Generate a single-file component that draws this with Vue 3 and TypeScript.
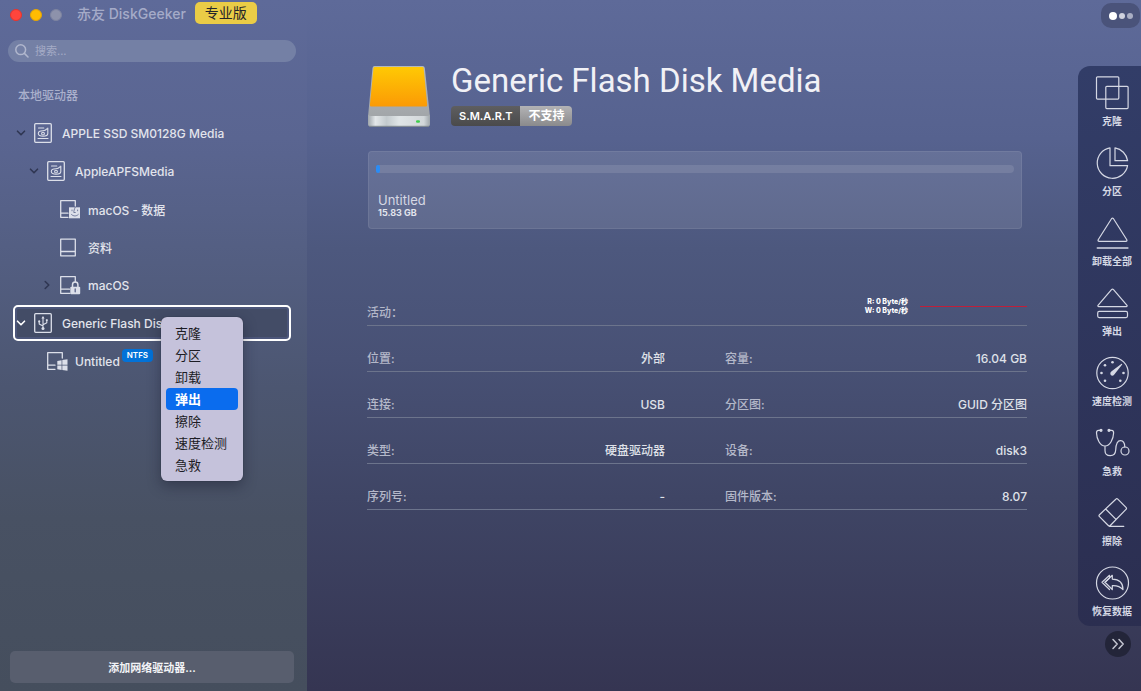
<script setup lang="ts">
import { ref } from 'vue'

type DriveIcon = 'ssd' | 'usb' | 'data' | 'volume' | 'locked' | 'windows'

interface Drive {
  id: string
  name: string
  level: number
  icon: DriveIcon
  arrow?: 'open' | 'closed'
  tag?: string
}

interface Detail {
  label: string
  value: string
}

const drives: Drive[] = [
  { id: 'ssd', name: 'APPLE SSD SM0128G Media', level: 0, icon: 'ssd', arrow: 'open' },
  { id: 'apfs', name: 'AppleAPFSMedia', level: 1, icon: 'ssd', arrow: 'open' },
  { id: 'data', name: 'macOS - 数据', level: 2, icon: 'data' },
  { id: 'docs', name: '资料', level: 2, icon: 'volume' },
  { id: 'macos', name: 'macOS', level: 2, icon: 'locked', arrow: 'closed' },
  { id: 'flash', name: 'Generic Flash Disk Media', level: 0, icon: 'usb', arrow: 'open' },
  { id: 'untitled', name: 'Untitled', level: 1, icon: 'windows', tag: 'NTFS' },
]

const menuItems = ['克隆', '分区', '卸载', '弹出', '擦除', '速度检测', '急救']
const tools = ['克隆', '分区', '卸载全部', '弹出', '速度检测', '急救', '擦除', '恢复数据']

const details: [Detail, Detail][] = [
  [{ label: '位置:', value: '外部' }, { label: '容量:', value: '16.04 GB' }],
  [{ label: '连接:', value: 'USB' }, { label: '分区图:', value: 'GUID 分区图' }],
  [{ label: '类型:', value: '硬盘驱动器' }, { label: '设备:', value: 'disk3' }],
  [{ label: '序列号:', value: '-' }, { label: '固件版本:', value: '8.07' }],
]

const selected = ref('flash')
const activeItem = ref('弹出')
const query = ref('')
</script>

<template>
  <div class="window">
    <aside class="sidebar">
      <header class="titlebar">
        <button class="light red" type="button" aria-label="关闭"></button>
        <button class="light yellow" type="button" aria-label="最小化"></button>
        <button class="light grey" type="button" aria-label="缩放"></button>
        <span class="app-name">赤友 DiskGeeker</span>
        <span class="edition">专业版</span>
      </header>

      <label class="search">
        <svg width="14" height="14" viewBox="0 0 14 14" fill="none" stroke="currentColor" stroke-width="1.5" stroke-linecap="round" aria-hidden="true">
          <circle cx="5.7" cy="5.7" r="4.9" />
          <path d="M9.4 9.4 13 13" />
        </svg>
        <input v-model="query" type="search" placeholder="搜索..." aria-label="搜索" />
      </label>

      <h2 class="group">本地驱动器</h2>

      <ul class="tree">
        <li v-for="d in drives" :key="d.id" class="node" :class="['level-' + d.level, { selected: selected === d.id }]">
          <button class="node-row" type="button" @click="selected = d.id">
            <span class="arrow">
              <svg v-if="d.arrow" width="10" height="10" viewBox="0 0 10 10" fill="none" stroke="currentColor" stroke-width="1.6" stroke-linecap="round" stroke-linejoin="round">
                <path :d="d.arrow === 'open' ? 'M1.5 3.2 5 6.8 8.5 3.2' : 'M3.2 1.5 6.8 5 3.2 8.5'" />
              </svg>
            </span>
            <svg class="drive-icon" width="21" height="20" viewBox="0 0 21 20" fill="none" stroke="currentColor" stroke-width="1.3" stroke-linejoin="round" stroke-linecap="round">
              <template v-if="d.icon === 'ssd'">
                <rect x=".7" y=".7" width="16.6" height="18.6" rx="1" />
                <path d="M4.5 5H9.800M13.800 5v5.500c0 1.700-2.200 2.700-4.800 2.700s-4.700-1-4.700-2.700S6.400 7.800 9 7.800c1.700 0 3-.8 3.900-1.900M4 15.500h10" stroke-width="1.100" />
                <circle cx="9" cy="10.600" r="1.400" stroke-width="1.100" />
              </template>
              <template v-else-if="d.icon === 'usb'">
                <rect x=".7" y=".7" width="16.6" height="18.6" rx="1" />
                <path d="M9 5v10M9 13 5.200 11V9M9 11.800 12.800 9.800V7.500" stroke-width="1.100" />
                <path d="M9 3 7.400 5.600h3.200zM11.900 6.200h1.800v1.800h-1.800z" fill="currentColor" stroke="none" />
                <circle cx="5.200" cy="8.400" r="1.100" fill="currentColor" stroke="none" />
                <circle cx="9" cy="15.400" r="1.500" fill="currentColor" stroke="none" />
              </template>
              <template v-else>
                <path v-if="d.icon === 'volume'" d="M.7 2.200h14.600v16.600H.7zM.7 14.500h14.600" />
                <path v-else-if="d.icon === 'locked'" d="M15.300 7V1.700H.7v16.600H10M.7 14.200H9.500" />
                <path v-else d="M15.300 7V1.700H.7v16.600H8M.7 14.200H8" />
                <template v-if="d.icon === 'data'">
                  <path d="M9 8.300h11v11H9z" fill="currentColor" stroke="none" />
                  <path class="cut" d="M15.200 8.300c-1 2-1.400 3.700-1.400 5.200h1.500M12 11v.8M17.600 11v.8M11.500 15.500c2 2 4.800 2 6.800 0" stroke-width=".8" />
                </template>
                <template v-else-if="d.icon === 'locked'">
                  <path d="M12.500 12V9.800a2.700 2.700 0 0 1 5.400 0V12" stroke-width="1.500" />
                  <rect x="10.300" y="11.700" width="9.900" height="7.500" rx="1" fill="currentColor" stroke="none" />
                  <path class="cut" d="M15.200 14v2.800" stroke-width="1.300" />
                </template>
                <path v-else-if="d.icon === 'windows'" d="M10.300 10l4.300-.8v4.500h-4.300zM15.300 9.100l5.200-.8v5.400h-5.200zM10.300 14.400h4.300v4.500l-4.300-.7zM15.300 14.400h5.200v5.400l-5.200-.8z" fill="currentColor" stroke="none" />
              </template>
            </svg>
            <span class="name">{{ d.name }}</span>
            <span v-if="d.tag" class="tag">{{ d.tag }}</span>
          </button>

          <div v-if="d.id === 'flash'" class="menu" role="menu">
            <button
              v-for="m in menuItems"
              :key="m"
              type="button"
              role="menuitem"
              :class="{ active: activeItem === m }"
              @mouseenter="activeItem = m"
            >{{ m }}</button>
          </div>
        </li>
      </ul>

      <button class="add" type="button">添加网络驱动器...</button>
    </aside>

    <main class="content">
      <header class="disk-header">
        <svg class="disk" width="64" height="64" viewBox="0 0 64 64" aria-hidden="true">
          <defs>
            <linearGradient id="orange" x1="0" y1="0" x2="0" y2="1">
              <stop offset="0" stop-color="#ffc904" />
              <stop offset="1" stop-color="#fb9a05" />
            </linearGradient>
            <linearGradient id="shelf" x1="0" y1="0" x2="0" y2="1">
              <stop offset="0" stop-color="#b4b8ba" />
              <stop offset="1" stop-color="#a2a6a9" />
            </linearGradient>
            <linearGradient id="front" x1="0" y1="0" x2="1" y2="0">
              <stop offset="0" stop-color="#9fa6ab" />
              <stop offset=".12" stop-color="#e3e7e9" />
              <stop offset=".3" stop-color="#c3cacd" />
              <stop offset=".5" stop-color="#e0e5e7" />
              <stop offset=".9" stop-color="#d2d7d9" />
              <stop offset="1" stop-color="#9fa6ab" />
            </linearGradient>
          </defs>
          <path d="M7.500 1h48q2 0 2.300 2l5.200 49H1L5.500 3q.3-2 2-2z" fill="url(#shelf)" />
          <path d="M7.800 2h47.400q1.200 0 1.400 1.300l3.600 36.700q.1 1.500-1.400 1.500H4.300q-1.500 0-1.400-1.500L6.500 3.300Q6.700 2 7.800 2z" fill="url(#orange)" />
          <path d="M1 49.500q1 1.500 3 1.500h56q2 0 3-1.500v10q0 2-2.500 2h-57Q1 61.500 1 59.500z" fill="url(#front)" />
          <path d="M2 61.300h60" stroke="#7e868c" stroke-width="1" />
          <rect x="49" y="55.300" width="4" height="2.400" rx="1.200" fill="#3fd04d" />
        </svg>
        <div class="heading">
          <h1>Generic Flash Disk Media</h1>
          <p class="smart"><span>S.M.A.R.T</span><span>不支持</span></p>
        </div>
      </header>

      <section class="card" aria-label="Untitled">
        <div class="usage"><div class="used"></div></div>
        <div class="vol-name">Untitled</div>
        <div class="vol-size">15.83 GB</div>
      </section>

      <dl class="details">
        <div class="line activity">
          <dt>活动：</dt>
          <dd>
            <span class="rates"><span>R: 0 Byte/秒</span><span>W: 0 Byte/秒</span></span>
            <span class="chart"></span>
          </dd>
        </div>
        <div v-for="(pair, i) in details" :key="i" class="line pairs">
          <div v-for="item in pair" :key="item.label" class="pair">
            <dt>{{ item.label }}</dt>
            <dd>{{ item.value }}</dd>
          </div>
        </div>
      </dl>
    </main>

    <aside class="rail">
      <button class="more" type="button" aria-label="更多"><i></i><i></i><i></i></button>

      <nav class="tools" aria-label="工具">
        <button v-for="(t, i) in tools" :key="t" type="button">
          <svg width="36" height="36" viewBox="0 0 36 36" fill="none" stroke="currentColor" stroke-width="1.2" stroke-linejoin="round" stroke-linecap="round" aria-hidden="true">
            <template v-if="i === 0">
              <rect x="2.500" y="1.800" width="22.300" height="22.300" rx="1" />
              <rect x="11.800" y="11.300" width="22.300" height="22.300" rx="1" />
            </template>
            <template v-else-if="i === 1">
              <path d="M16 2.900A15.300 15.300 0 1 0 33.600 20.700H16z" />
              <path d="M21 2.900v12.800h12.600A15.300 15.300 0 0 0 21 2.900z" />
            </template>
            <template v-else-if="i === 2">
              <path d="M17.500 3.700q1-1 2 0L32.800 24.700q.6 1.600-1 1.700H5.200q-1.600-.1-1-1.700z" />
              <path d="M3.300 33h30.600" stroke-width="1.500" />
            </template>
            <template v-else-if="i === 3">
              <path d="M17.500 4.700q1-1 2 0L33 20.300q.5 1.200-.8 1.300H4.800q-1.300-.1-.8-1.300z" />
              <rect x="3.700" y="26.400" width="29.800" height="6.200" rx="1.500" />
            </template>
            <template v-else-if="i === 4">
              <circle cx="18.500" cy="18" r="15.700" />
              <path d="M16.300 18.500q0-1.300 1.300-2.200L27.600 8.700q.8 0 .6.700L20.300 19.500q-1 1.300-2.300 1.200-1.700-.2-1.700-2.200z" fill="currentColor" stroke="none" />
              <g fill="currentColor" stroke="none">
                <circle cx="18.500" cy="7.300" r="1.300" /><circle cx="11" cy="10.300" r="1.300" />
                <circle cx="7.500" cy="18" r="1.300" /><circle cx="11" cy="25.700" r="1.300" />
                <circle cx="29.500" cy="18" r="1.300" /><circle cx="26.300" cy="25.700" r="1.300" />
              </g>
            </template>
            <template v-else-if="i === 5">
              <path d="M7 5.300H4.500Q2.300 5.500 2.500 8c.2 6 3.500 13 8.500 13s8.400-7 8.600-13q.2-2.500-2-2.700H15M11 21v4.500c0 3 2 5.200 5.300 5.200 3.500 0 5.200-2.200 5.400-5.700.2-5 1.300-9.300 4.800-9.300 2.800 0 4.200 2.500 4.300 6.300" />
              <circle cx="31" cy="26" r="4" />
              <circle cx="7" cy="5.300" r="1" fill="currentColor" /><circle cx="15" cy="5.300" r="1" fill="currentColor" />
            </template>
            <template v-else-if="i === 6">
              <path d="M21.800 4.200q1-1 2 0l8.200 8.200q1 1 0 2L16.300 30.500q-1 1-2 0L5.500 21.700q-1-1 0-2zM11.700 14 22 24.300M15.300 31.300h14.500" />
            </template>
            <template v-else>
              <circle cx="18.500" cy="18" r="16" />
              <path d="M18.300 10.300 11 17.300l7.300 7.200v-3.900c5-.2 8 .8 10.700 4 0-6-3.500-10.300-10.700-10.500z" />
              <path d="M15.500 10.300 8 17.300l7.500 7.200M15.500 10.300v2.800L11 17.300" />
            </template>
          </svg>
          <span>{{ t }}</span>
        </button>
      </nav>

      <button class="collapse" type="button" aria-label="收起">
        <svg width="14" height="12" viewBox="0 0 14 12" fill="none" stroke="currentColor" stroke-width="1.500" stroke-linecap="round" stroke-linejoin="round">
          <path d="M2 1.500 6.200 6 2 10.500M8 1.500 12.200 6 8 10.500" />
        </svg>
      </button>
    </aside>
  </div>
</template>

<style>
body {
  margin: 0;
}
</style>

<style scoped>
.window {
  display: grid;
  grid-template-columns: 307px minmax(0, 1fr) 63px;
  min-height: 100vh;
  font-family: Inter, "Noto Sans CJK SC", sans-serif;
  font-size: 12px;
  color: #e2e4ec;
  background: linear-gradient(#5e6a99 0%, #56628f 20%, #4d587e 36%, #485175 52%, #3f4565 72%, #353552 100%);
}

button {
  font: inherit;
  color: inherit;
  border: 0;
  padding: 0;
  background: none;
}

h1, h2, p, ul, dl, dd {
  margin: 0;
  padding: 0;
}

.sidebar {
  display: flex;
  flex-direction: column;
  padding-bottom: 8px;
  background: linear-gradient(#5e6a99 0%, #5a6591 20%, #535e81 38%, #4c5671 56%, #485163 75%, #454e5d 100%);
}

.titlebar {
  display: flex;
  align-items: center;
  height: 30px;
  padding-left: 10px;
  margin-bottom: 10px;
}

.light {
  box-sizing: border-box;
  width: 12px;
  height: 12px;
  margin-right: 8px;
  border-radius: 50%;
}

.red { background: #ff453c; border: 1px solid #e8342c; }
.yellow { background: #ffbc02; border: 1px solid #e5a505; }
.grey { background: #8d92ab; border: 1px solid #7d83a0; }

.app-name {
  margin: 0 9px 0 7px;
  font-size: 14px;
  font-weight: 500;
  line-height: 22px;
  white-space: nowrap;
  color: #a5abc8;
  padding-bottom: 2px;
}

.edition {
  padding: 0 10px;
  border-radius: 5px;
  background: #eacc46;
  color: #25252a;
  font-size: 14px;
  line-height: 22px;
  margin-bottom: 4px;
}

.search {
  display: flex;
  align-items: center;
  gap: 6px;
  height: 22px;
  margin: 0 11px 0 8px;
  padding: 0 7px;
  border-radius: 11px;
  background: #7480a5;
  color: #b0b6cd;
}

.search input {
  flex: 1;
  min-width: 0;
  padding: 0;
  border: 0;
  outline: 0;
  background: none;
  font: inherit;
  font-size: 11px;
  color: #e2e4ec;
}

.search input::placeholder {
  color: #a4abc5;
  opacity: 1;
}

.group {
  margin: 25px 0 9px 18px;
  font-size: 12px;
  line-height: 18px;
  font-weight: 500;
  color: #aab0cc;
}

.tree {
  flex: 1;
  list-style: none;
}

.node {
  position: relative;
  margin: 0 16px 0 13px;
  padding: 1px 0;
}

.node-row {
  box-sizing: border-box;
  display: flex;
  align-items: center;
  width: 100%;
  height: 36px;
  padding-left: 3px;
  font-weight: 500;
  white-space: nowrap;
  text-align: left;
}

.level-1 .node-row { padding-left: 16px; }
.level-2 .node-row { padding-left: 29px; }

.arrow {
  display: flex;
  width: 18px;
  color: #2f3652;
}

.drive-icon {
  margin-right: 7px;
  color: #dcdfe9;
}

.cut { stroke: #5a648a; }

.selected .node-row {
  padding-left: 1px;
  border: 2px solid #fff;
  border-radius: 5px;
  background: #434c66;
  box-shadow: inset 0 0 0 2px #4c567a;
}

.selected .arrow { color: #fff; }

.tag {
  margin: 0 0 11px 2px;
  padding: 0 5px;
  border-radius: 4px;
  background: #0272d8;
  color: #fff;
  font-size: 8px;
  font-weight: 600;
  line-height: 13px;
}

.menu {
  position: absolute;
  z-index: 1;
  top: 13px;
  left: 148px;
  box-sizing: border-box;
  width: 82px;
  padding: 5px;
  border-radius: 6px;
  background: #c5c2db;
  box-shadow: 0 0 1px #1d2030, 0 5px 14px rgba(20, 22, 40, 0.4);
}

.menu button {
  display: block;
  width: 100%;
  padding-left: 9px;
  border-radius: 4px;
  font-size: 13px;
  line-height: 22px;
  text-align: left;
  color: #1c1c24;
}

.menu .active {
  background: #0a6cee;
  color: #fff;
  font-weight: 600;
}

.add {
  margin: 0 13px 0 10px;
  height: 32px;
  border-radius: 5px;
  background: #585e6e;
  font-size: 11px;
  font-weight: 600;
  color: #f2f3f6;
}

.content {
  padding: 65px 51px 24px 60px;
}

.disk-header {
  display: flex;
  gap: 20px;
}

.disk { flex: none; }

.heading h1 {
  font-family: Roboto, "Noto Sans CJK SC", sans-serif;
  font-size: 33px;
  font-weight: 400;
  line-height: 32px;
  color: #f1f1f6;
}

.smart {
  display: flex;
  width: max-content;
  margin-top: 9px;
  border-radius: 4px;
  overflow: hidden;
  font-size: 11px;
  font-weight: 600;
  line-height: 20px;
  color: #fff;
}

.smart span {
  padding: 0 8px;
  background: linear-gradient(#5e5e60, #4a4a4b);
}

.smart span + span {
  font-size: 12px;
  background: linear-gradient(#b3b3b5, #8a8a8c);
}

.card {
  box-sizing: border-box;
  min-height: 78px;
  margin: 22px 5px 0 1px;
  padding: 13px 7px 9px;
  border: 1px solid rgba(255, 255, 255, 0.07);
  border-radius: 4px;
  background: rgba(255, 255, 255, 0.1);
}

.usage {
  height: 8px;
  border-radius: 4px;
  background: rgba(255, 255, 255, 0.11);
}

.used {
  width: 4px;
  height: 100%;
  border-radius: 2px;
  background: #2a8cf5;
}

.vol-name {
  margin: 20px 0 0 2px;
  font-size: 13px;
  line-height: 15px;
  color: #d6d8e4;
}

.vol-size {
  margin-left: 2px;
  font-size: 9px;
  font-weight: 700;
  line-height: 9px;
}

.details {
  margin-top: 51px;
}

.line {
  box-sizing: border-box;
  height: 46px;
  padding-top: 24px;
  border-bottom: 1px solid #6c748c;
  font-weight: 500;
  line-height: 18px;
}

dt { color: #b4b8c9; }
dd { color: #dfe1e8; }

.activity,
.pair {
  display: flex;
  justify-content: space-between;
}

.pairs {
  display: grid;
  grid-template-columns: 298fr 302fr;
  column-gap: 60px;
}

.activity dd {
  display: flex;
  gap: 12px;
  margin-top: -7px;
}

.rates {
  font-size: 7px;
  font-weight: 800;
  line-height: 9px;
  text-align: right;
  color: #fff;
}

.rates span { display: block; }

.chart {
  width: 107px;
  height: 1px;
  margin-top: 9px;
  background: #c01f3a;
}

.rail {
  display: flex;
  flex-direction: column;
  padding-top: 3px;
}

.more {
  display: flex;
  align-items: center;
  justify-content: center;
  gap: 2px;
  align-self: flex-end;
  width: 39px;
  height: 25px;
  margin: 0 1px 38px 0;
  border-radius: 10px;
  background: #4a537a;
}

.more i {
  width: 6px;
  height: 6px;
  border-radius: 50%;
  background: #a9aec3;
}

.more i:first-child {
  width: 8px;
  height: 8px;
  background: #fff;
}

.more i:nth-child(2) { background: #cfd2df; }

.tools {
  padding-left: 5px;
  border-radius: 12px 0 0 12px;
  background: linear-gradient(#323d68, #2b2e50);
}

.tools button {
  display: flex;
  flex-direction: column;
  align-items: center;
  gap: 3px;
  box-sizing: border-box;
  width: 100%;
  height: 70px;
  padding-top: 9px;
  font-size: 10px;
  font-weight: 600;
  line-height: 14px;
  white-space: nowrap;
  color: #d5d8e4;
}

.collapse {
  display: flex;
  align-items: center;
  justify-content: center;
  align-self: center;
  width: 26px;
  height: 26px;
  margin: 5px 0 0 16px;
  border-radius: 50%;
  background: #232539;
  color: #c3c5d0;
}
</style>
